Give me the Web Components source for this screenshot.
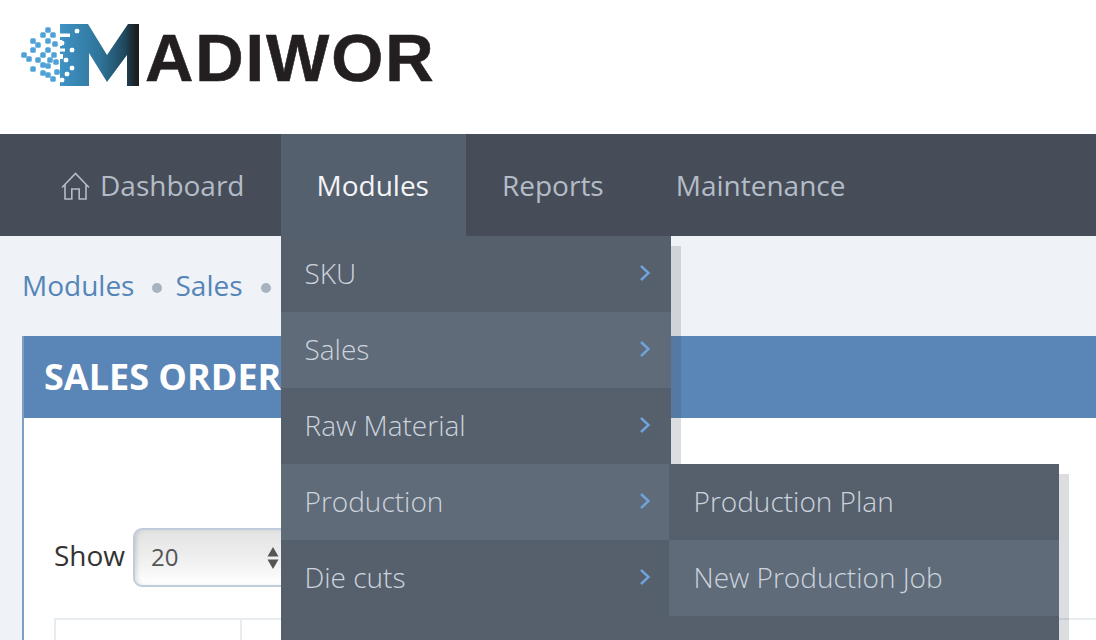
<!DOCTYPE html>
<html lang="en">
<head>
<meta charset="utf-8">
<title>Madiwor</title>
<style>
  html, body { margin: 0; height: 640px; overflow: hidden; }
  body { background: #eff3f8; font-family: "Open Sans", "Liberation Sans", sans-serif; }
</style>
</head>
<body>
<mw-header></mw-header>
<mw-nav>
  <mw-nav-item icon="home">Dashboard</mw-nav-item>
  <mw-nav-item active>
    Modules
    <mw-menu slot="dropdown" style="--menu-left:0; --menu-top:100%">
      <mw-menu-item arrow>SKU</mw-menu-item>
      <mw-menu-item arrow hover>Sales</mw-menu-item>
      <mw-menu-item arrow>Raw Material</mw-menu-item>
      <mw-menu-item arrow hover>
        Production
        <mw-menu slot="submenu" style="--menu-left:388px; --menu-top:0">
          <mw-menu-item>Production Plan</mw-menu-item>
          <mw-menu-item hover>New Production Job</mw-menu-item>
        </mw-menu>
      </mw-menu-item>
      <mw-menu-item arrow>Die cuts</mw-menu-item>
    </mw-menu>
  </mw-nav-item>
  <mw-nav-item>Reports</mw-nav-item>
  <mw-nav-item>Maintenance</mw-nav-item>
</mw-nav>
<mw-content>
  <mw-breadcrumb slot="crumbs"></mw-breadcrumb>
  <mw-portlet heading="SALES ORDER">
    <mw-length-select value="20"></mw-length-select>
    <mw-table></mw-table>
  </mw-portlet>
</mw-content>

<script>
class MwHeader extends HTMLElement {
  constructor() {
    super();
    this.attachShadow({ mode: "open" });
    // blue particles left of the M, white specks cut into it
    const blue = [[48,30],[43,35],[53,35],[33,41],[38,45],[48,41],[55,44],[33,50],[43,55],[48,50],[54,55],[24,55],[29,59],[38,60],[50,60],[56,62],[33,69],[43,65],[43,73],[53,79],[48,66],[57,72],[48,75]];
    const white = [[77,31],[72,50],[72,68],[67,74],[62,80],[66,60],[62,43]];
    const dot = (c, [x, y], s = 5.5) => `<rect x="${x - s / 2}" y="${y - s / 2}" width="${s}" height="${s}" rx="1.5" fill="${c}"/>`;
    this.shadowRoot.innerHTML = `
      <style>
        :host { display: flex; height: 134px; box-sizing: border-box; padding: 24px 0 0 20px; background: #fff; }
        svg { width: 122px; height: 62px; flex: none; filter: blur(.6px); }
        .name {
          margin: 3px 0 0 3px; height: 62px;
          font: bold 67px/62px "Liberation Sans", Arial, sans-serif;
          letter-spacing: 1.9px; color: #231f20; filter: blur(.5px);
          -webkit-text-stroke: .6px #231f20;
        }
      </style>
      <svg viewBox="20 24 122 62" aria-hidden="true">
        <defs>
          <linearGradient id="m" x1="60" x2="140" y1="0" y2="0" gradientUnits="userSpaceOnUse">
            <stop offset="0" stop-color="#3f93c6"/>
            <stop offset=".5" stop-color="#2f7499"/>
            <stop offset=".8" stop-color="#1f4a60"/>
            <stop offset=".95" stop-color="#1c1f22"/>
          </linearGradient>
        </defs>
        <path fill="url(#m)" d="M60 24H88L107 55L128 24H139V86H127V55L107 82L89 53V86H60Z"/>
        <rect x="50" y="33.5" width="20" height="3.5" fill="#fff"/>
        <rect x="55" y="48.5" width="10" height="3" fill="#fff"/>
        <path fill="#fff" d="M50 66h3v-3h3v3h3v3h-3v3h-3v-3h-3z"/>
        <rect x="59" y="40" width="3" height="6" fill="#fff"/>
        <rect x="59" y="54" width="4" height="5" fill="#fff"/>
        ${blue.map(p => dot("#4fa2d8", p)).join("")}
        ${white.map(p => dot("#fff", p, 4.5)).join("")}
      </svg>
      <div class="name">ADIWOR</div>
    `;
  }
}

class MwNav extends HTMLElement {
  constructor() {
    super();
    this.attachShadow({ mode: "open" });
    this.shadowRoot.innerHTML = `
      <style>
        :host { display: flex; height: 102px; padding-left: 25px; background: #464d58; position: relative; z-index: 5; }
      </style>
      <slot></slot>
    `;
  }
}

const HOME_ICON = `<svg width="29" height="28" viewBox="0 0 29 28" fill="none" stroke="currentColor" stroke-width="1.6">
  <path d="M1 15.5 14.5 1.5 28 15.5M4 12.5V27H10.8V17H18.2V27H25V12.5"/>
</svg>`;

class MwNavItem extends HTMLElement {
  constructor() {
    super();
    this.attachShadow({ mode: "open" });
    const icon = this.getAttribute("icon") === "home" ? HOME_ICON : "";
    this.shadowRoot.innerHTML = `
      <style>
        :host {
          display: flex; align-items: center; gap: 10px; padding: 0 36px;
          position: relative; font-size: 28px; color: #b4bcc8; white-space: nowrap;
        }
        :host([active]) { background: #55606e; color: #f4f5f6; padding-right: 37px; }
        svg { display: block; margin-top: 1px; }
      </style>
      ${icon}<span><slot></slot></span><slot name="dropdown"></slot>
    `;
  }
}

class MwMenu extends HTMLElement {
  constructor() {
    super();
    this.attachShadow({ mode: "open" });
    this.shadowRoot.innerHTML = `
      <style>
        :host {
          display: block; position: absolute; left: var(--menu-left); top: var(--menu-top);
          width: 390px; padding-bottom: 40px; background: #56606d;
          box-shadow: 10px 10px 0 rgba(60, 65, 85, .18); z-index: 10;
        }
      </style>
      <slot></slot>
    `;
  }
}

class MwMenuItem extends HTMLElement {
  constructor() {
    super();
    this.attachShadow({ mode: "open" });
    const hasArrow = this.hasAttribute("arrow");
    const chevron = hasArrow
      ? `<svg width="12" height="18" viewBox="0 0 12 18" fill="none" stroke="#6fa3da" stroke-width="2.4"><path d="M2 2l7.5 7L2 16"/></svg>`
      : "";
    this.shadowRoot.innerHTML = `
      <style>
        :host {
          display: flex; align-items: center; justify-content: space-between;
          height: 76px; box-sizing: border-box; padding: 0 20px 2px ${hasArrow ? 24 : 25}px; position: relative;
          font-size: 28px; font-weight: 300; color: #cdd3dc; white-space: nowrap;
        }
        :host([hover]) { background: #5f6b79; }
      </style>
      <span><slot></slot></span>${chevron}<slot name="submenu"></slot>
    `;
  }
}

class MwContent extends HTMLElement {
  constructor() {
    super();
    this.attachShadow({ mode: "open" });
    this.shadowRoot.innerHTML = `
      <style>
        :host { display: block; padding: 30px 0 0 22px; }
        .crumbs { height: 40px; margin-bottom: 30px; }
      </style>
      <div class="crumbs"><slot name="crumbs"></slot></div>
      <slot></slot>
    `;
  }
}

class MwBreadcrumb extends HTMLElement {
  constructor() {
    super();
    this.attachShadow({ mode: "open" });
    const items = ["Modules", "Sales"];
    this.shadowRoot.innerHTML = `
      <style>
        :host { display: flex; align-items: center; height: 38px; font-size: 28px; color: #5585b7; }
        i { width: 10px; height: 10px; margin: 6px 13px 0 18px; border-radius: 50%; background: #a8b3c1; }
      </style>
      ${items.map(t => `<span>${t}</span><i></i>`).join("")}
    `;
  }
}

class MwPortlet extends HTMLElement {
  constructor() {
    super();
    this.attachShadow({ mode: "open" });
    this.shadowRoot.innerHTML = `
      <style>
        :host { display: block; width: 1200px; box-sizing: border-box; border-left: 2px solid #7fa0c6; background: #fff; }
        .title {
          height: 82px; box-sizing: border-box; padding: 0 0 2px 20px; display: flex; align-items: center;
          background: #5a86b7; color: #fff; font-size: 36px; font-weight: 700; white-space: nowrap;
        }
        .body { padding: 110px 0 0 30px; }
      </style>
      <div class="title">${this.getAttribute("heading")}</div>
      <div class="body"><slot></slot></div>
    `;
  }
}

class MwLengthSelect extends HTMLElement {
  constructor() {
    super();
    this.attachShadow({ mode: "open" });
    this.shadowRoot.innerHTML = `
      <style>
        :host { display: flex; align-items: center; gap: 8px; font-size: 28px; color: #333; }
        .label { margin-top: -5px; }
        .select {
          display: flex; align-items: center; justify-content: space-between;
          width: 165px; height: 59px; box-sizing: border-box; padding: 0 17px 3px 16px;
          border: 2px solid #bfccdd; border-radius: 9px;
          background: linear-gradient(#e3e3e3, #f0f0f0 55%, #fff);
          box-shadow: inset 3px 0 4px -1px rgba(0, 0, 0, .12);
          font-size: 24px; color: #555;
        }
        svg { display: block; margin-top: 3px; }
      </style>
      <span class="label">Show</span>
      <div class="select">
        <span>${this.getAttribute("value")}</span>
        <svg width="12" height="24" viewBox="0 0 12 24" fill="#555"><path d="M6 1l5.5 9.5H.5zM6 23l5.5-9.5H.5z"/></svg>
      </div>
    `;
  }
}

class MwTable extends HTMLElement {
  constructor() {
    super();
    this.attachShadow({ mode: "open" });
    this.shadowRoot.innerHTML = `
      <style>
        :host {
          display: grid; grid-template-columns: 184px 1fr; height: 80px; margin-top: 31px;
          border: 2px solid #e7ecf1; border-bottom: 0;
        }
        div + div { border-left: 2px solid #e7ecf1; }
      </style>
      <div></div><div></div>
    `;
  }
}

customElements.define("mw-header", MwHeader);
customElements.define("mw-nav", MwNav);
customElements.define("mw-nav-item", MwNavItem);
customElements.define("mw-menu", MwMenu);
customElements.define("mw-menu-item", MwMenuItem);
customElements.define("mw-content", MwContent);
customElements.define("mw-breadcrumb", MwBreadcrumb);
customElements.define("mw-portlet", MwPortlet);
customElements.define("mw-length-select", MwLengthSelect);
customElements.define("mw-table", MwTable);
</script>
</body>
</html>
